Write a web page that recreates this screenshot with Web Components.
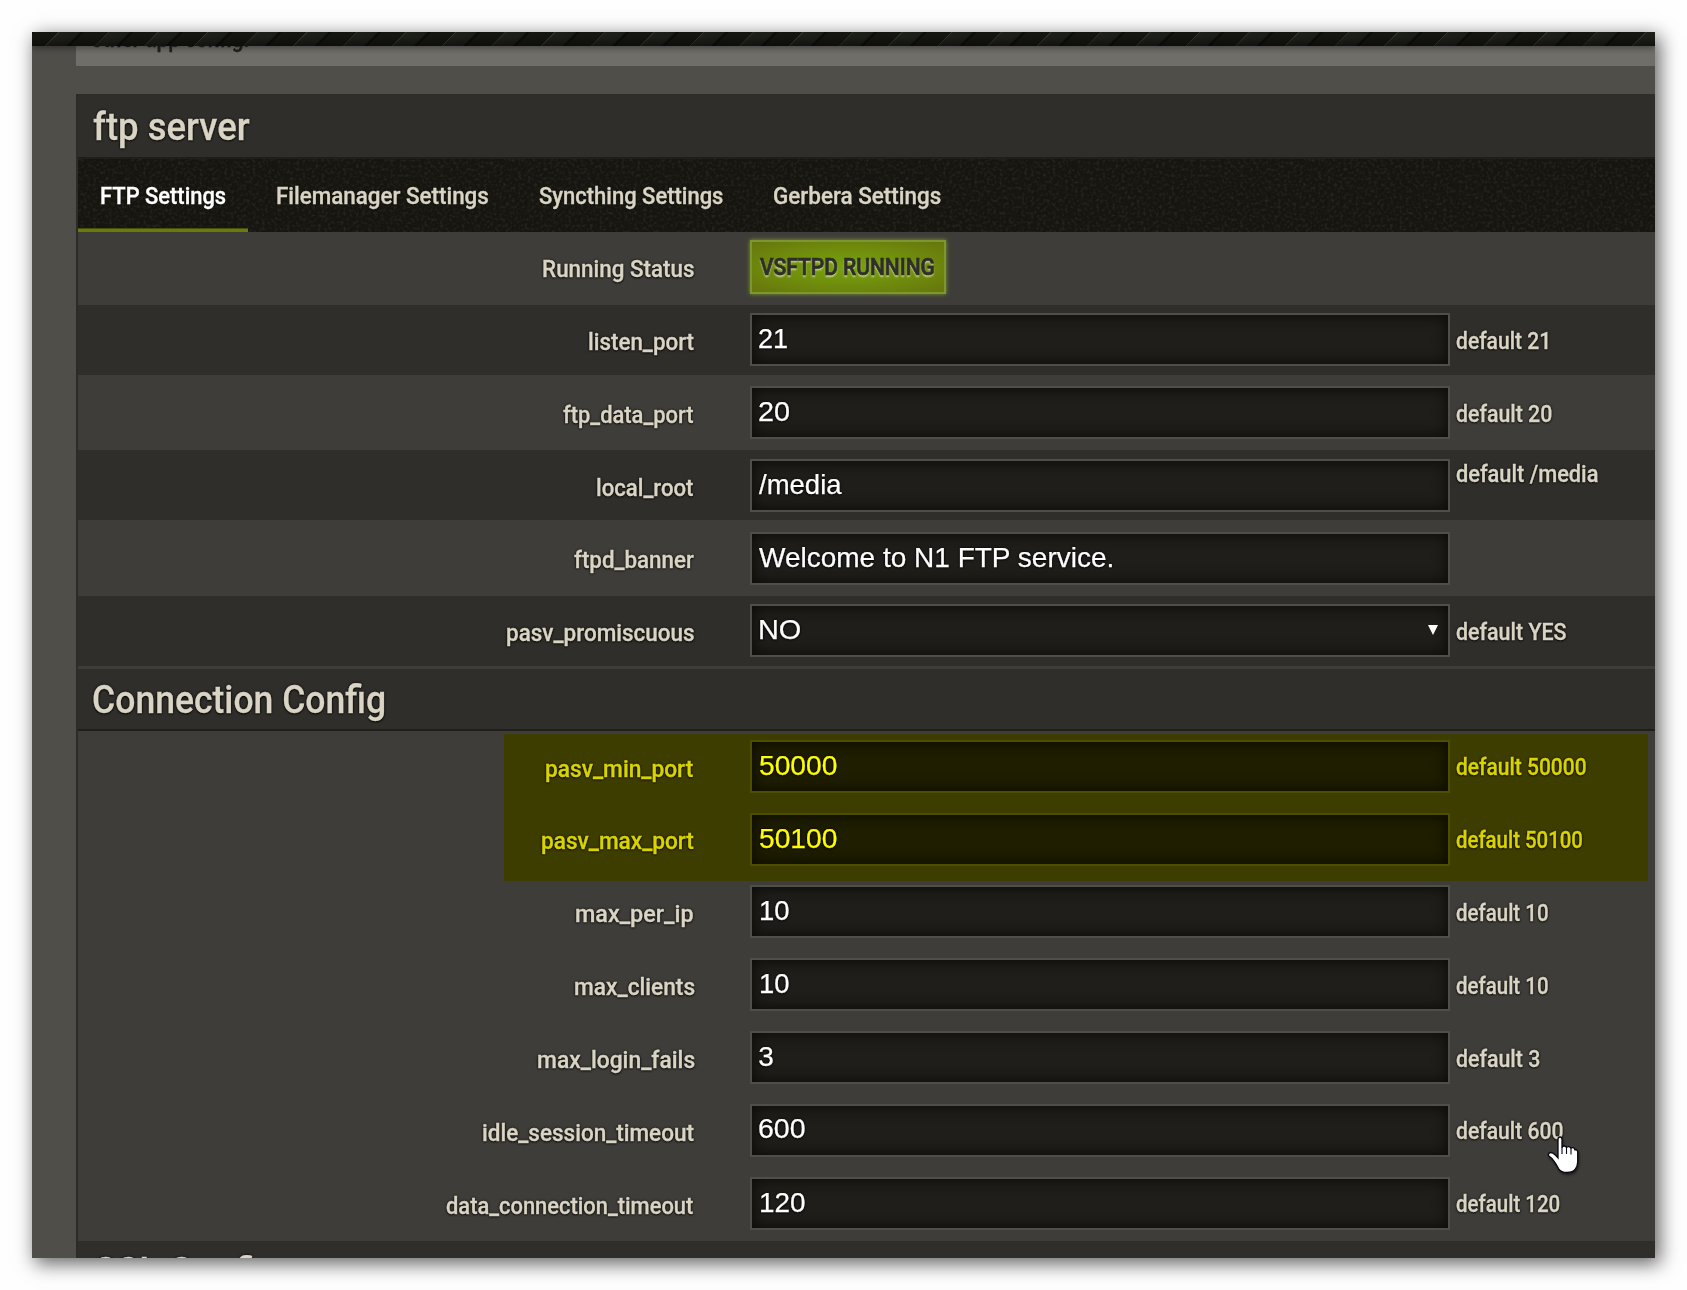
<!DOCTYPE html>
<html lang="en">
<head>
<meta charset="utf-8">
<title>ftp server</title>
<style>
html,body{margin:0;padding:0}
body{width:1687px;height:1290px;overflow:hidden;background:#fefefe;font-family:Roboto,"Liberation Sans",sans-serif}
</style>
</head>
<body>
<app-window>
  <app-notice><fit-text w="157" b="1" size="23">other app config.</fit-text></app-notice>
  <app-panel>
    <panel-title style="--h:63px;--x:14.500px" text="ftp server" w="156.8" b="46"></panel-title>
    <tab-bar>
      <tab-item active style="--w:170px;--p:22.500px"><fit-text w="124.3" b="45" size="23">FTP Settings</fit-text></tab-item>
      <tab-item style="--w:262px;--p:29px"><fit-text w="211" b="45" size="23">Filemanager Settings</fit-text></tab-item>
      <tab-item style="--w:235px;--p:28.500px"><fit-text w="183.6" b="45" size="23">Syncthing Settings</fit-text></tab-item>
      <tab-item style="--w:220px;--p:28.6px"><fit-text w="166.4" b="45" size="23">Gerbera Settings</fit-text></tab-item>
    </tab-bar>
    <form-row h="73" top="8" label="Running Status" lw="150.7" lb="37"><status-badge></status-badge></form-row>
    <form-row dark h="70" top="8" label="listen_port" lw="105.4" lb="37" value="21" vx=".5" vw="28.6" vb="35" hint="default 21" hw="91.6" hb="36"></form-row>
    <form-row h="75" top="11" label="ftp_data_port" lw="130.9" lb="37" value="20" vw="30.4" vb="35" hint="default 20" hw="95.3" hb="36"></form-row>
    <form-row dark h="70" top="9" label="local_root" lw="96.8" lb="37" value="/media" vw="83" vb="35" hint="default /media" hw="142" hb="23"></form-row>
    <form-row h="76" top="12" label="ftpd_banner" lw="119.7" lb="36" value="Welcome to N1 FTP service." vw="354" vb="35"></form-row>
    <form-row dark h="70" top="8" select label="pasv_promiscuous" lw="186.8" lb="37" value="NO" vx="1" vw="40.5" vb="35" hint="default YES" hw="110.6" hb="36"></form-row>
    <panel-title class="section" style="--h:60px;--x:14.500px" text="Connection Config" w="291.2" b="44"></panel-title>
    <highlight-area>
      <form-row h="73" top="9" label="pasv_min_port" lw="147.6" lb="37" value="50000" vx=".7" vw="76.8" vb="35" hint="default 50000" hw="129.6" hb="35"></form-row>
      <form-row h="73" top="9" label="pasv_max_port" lw="152.2" lb="36" value="50100" vx=".7" vw="76.8" vb="35" hint="default 50100" hw="126" hb="35"></form-row>
    </highlight-area>
    <form-row h="72" top="8" label="max_per_ip" lw="117.6" lb="37" value="10" vx="1.8" vw="28" vb="35" hint="default 10" hw="91.6" hb="36"></form-row>
    <form-row h="73" top="9" label="max_clients" lw="119.3" lb="37" value="10" vx="1.8" vw="28" vb="35" hint="default 10" hw="91.6" hb="36"></form-row>
    <form-row h="73" top="9" label="max_login_fails" lw="156.3" lb="37" value="3" vx=".5" vw="14" vb="35" hint="default 3" hw="83.3" hb="36"></form-row>
    <form-row h="73" top="9" label="idle_session_timeout" lw="211.3" lb="37" value="600" vw="46" vb="34" hint="default 600" hw="106.6" hb="35"></form-row>
    <form-row h="73" top="9" label="data_connection_timeout" lw="247.6" lb="37" value="120" vx="1.8" vw="44" vb="35" hint="default 120" hw="103.3" hb="35"></form-row>
    <panel-title class="last" style="--h:60px;--x:17px" text="SSL Config" w="181" b="41"></panel-title>
  </app-panel>
</app-window>
<script>
const shadow=(el,html)=>{const r=el.attachShadow({mode:'open'});r.innerHTML=html;return r;};
const ctx=document.createElement('canvas').getContext('2d');

// Condenses a run of text so its ink spans exactly `w` px with its baseline `b` px below the host's top.
customElements.define('fit-text',class extends HTMLElement{
  connectedCallback(){
    if(this.shadowRoot)return;
    const n=k=>parseFloat(this.getAttribute(k));
    const size=n('size'),w=n('w'),b=n('b')+1,weight=this.getAttribute('weight')||'500';
    const fam=this.getAttribute('family')||'Roboto';
    const L=Math.round(size*1.3);
    const stroke=this.getAttribute('stroke')||(size>30?'.3':'.35');
    ctx.font=`${weight} ${size}px "${fam}"`;
    const m=ctx.measureText(this.textContent.trim());
    const s=w/(m.actualBoundingBoxRight+m.actualBoundingBoxLeft);
    const a=Math.round(m.fontBoundingBoxAscent),d=Math.round(m.fontBoundingBoxDescent);
    const base=Math.round((L-a-d)/2)+a;
    shadow(this,`<style>:host{display:block;width:${w}px;height:${L}px;margin-top:${b-base}px;flex:none;white-space:nowrap}
    span{display:inline-block;font:${weight} ${size}px/${L}px "${fam}","Liberation Sans",sans-serif;-webkit-text-stroke:${stroke}px currentColor;transform-origin:0 0;transform:translateX(${m.actualBoundingBoxLeft*s}px) scaleX(${s})}</style><span><slot></slot></span>`);
  }
});

customElements.define('app-window',class extends HTMLElement{
  constructor(){super();shadow(this,`<style>
  :host{display:block;padding:32px 0 0 32px}
  .win{width:1623px;height:1226px;background:#4f4e49;box-shadow:4px 5px 18px 1px rgba(0,0,0,.6);display:flex;flex-direction:column;position:relative}
  .bar{height:14px;flex:none;position:relative;z-index:2;box-shadow:0 2px 6px rgba(0,0,0,.4);clip-path:inset(0 0 -14px 0);
   background:linear-gradient(rgba(0,0,0,0) 30%,rgba(0,0,0,.35)),repeating-linear-gradient(135deg,#0c0d0a 0,#0c0d0a 1.3px,#141410 2px,#141410 18.7px,#383a34 19.1px,#1d1f19 20px,#1b1d18 33.4px,#0c0d0a 35.07px)}
  .body{flex:1;min-height:0;overflow:hidden;padding-left:44px;color:#d9d4c4}
  mouse-pointer{position:absolute;left:1514px;top:1102px}
  </style><div class="win"><div class="bar"></div><div class="body"><slot></slot></div><mouse-pointer></mouse-pointer></div>`);}
});
customElements.define('mouse-pointer',class extends HTMLElement{
  constructor(){super();shadow(this,`<style>:host{display:block;filter:drop-shadow(1px 2px 1px rgba(0,0,0,.5))}svg{display:block}</style>
  <svg width="34" height="42" viewBox="0 0 34 42"><path d="M12 5.5q0-2.5 2-2.5t2 2.5V14q0-2 2.2-2t2.3 2q.2-1.600 2.200-1.400t2.200 2.200q.2-1.400 2-1.200t2 2.200q2.800-.5 2.800 2.400V28q-.2 4.500-2.400 7.200-2.200 3.300-8.300 3.300-6 0-8.300-3.700-2.500-4.500-4.900-7.800-1.800-3-4.600-4.600-1.600-1.600-.2-3.200 1.400-1.400 4 0 2.600 1.600 5 4.600z" fill="#fff" stroke="#080810" stroke-width="1.300"/><path d="M16 13.500V20M20.500 14V20M25 15V20.500" stroke="#080810" stroke-width="1.100"/></svg>`);}
});
customElements.define('app-notice',class extends HTMLElement{
  constructor(){super();shadow(this,`<style>:host{display:flex;height:20px;background:#6f6e69;padding-left:15px;color:#22211e;margin-bottom:28px}</style><slot></slot>`);}
});
customElements.define('app-panel',class extends HTMLElement{
  constructor(){super();shadow(this,`<style>:host{display:flex;flex-direction:column;border-left:2px solid #2c2b27;background:#3e3d39;text-shadow:0 0 3px #000,0 1px 2px rgba(0,0,0,.8)}::slotted(*){flex:none}</style><slot></slot>`);}
});
customElements.define('panel-title',class extends HTMLElement{
  constructor(){super();shadow(this,`<style>
  :host{display:flex;height:var(--h);background:#2f2e2a;border-bottom:2px solid #1f1e1b;padding-left:var(--x,15px)}
  :host(.section){margin-top:3px}:host(.last){padding-top:3px}</style><fit-text size="39" w="${this.getAttribute('w')}" b="${this.getAttribute('b')}">${this.getAttribute('text')}</fit-text>`);}
});
customElements.define('tab-bar',class extends HTMLElement{
  constructor(){super();shadow(this,`<style>
  :host{display:flex;height:73px;background:#161510;position:relative;text-shadow:0 0 2px #000}
  svg{position:absolute;inset:0;width:100%;height:100%}::slotted(*){z-index:1}</style>
  <svg aria-hidden="true"><filter id="grain" x="0" y="0" width="100%" height="100%" color-interpolation-filters="sRGB"><feTurbulence type="fractalNoise" baseFrequency=".32" numOctaves="2" seed="8"/><feColorMatrix values="0 0 0 0 .2  0 0 0 0 .2  0 0 0 0 .17  1.5 0 0 0 -.7"/></filter><rect width="100%" height="100%" filter="url(#grain)"/></svg><slot></slot>`);}
});
customElements.define('tab-item',class extends HTMLElement{
  constructor(){super();shadow(this,`<style>
  :host{display:flex;box-sizing:border-box;width:var(--w);padding-left:var(--p)}
  :host([active]){color:#fff;box-shadow:inset 0 -3px #6b7a0b,inset 0 -4px #46500c}</style><slot></slot>`);}
});
customElements.define('status-badge',class extends HTMLElement{
  constructor(){super();shadow(this,`<style>
  :host{display:flex;box-sizing:border-box;width:195.500px;height:54px;border:2px solid #7c9730;padding-left:8px;color:#2f2e2a;
  background:radial-gradient(ellipse at center,#78a30c 0,#6f8b0c 55%,#66750c 100%);box-shadow:0 0 4px #8a9c2a;text-shadow:0 2px 2px rgba(235,240,200,.75)}</style>
  <fit-text size="23" stroke=".7" w="174.200" b="33">VSFTPD RUNNING</fit-text>`);}
});
customElements.define('form-field',class extends HTMLElement{
  constructor(){super();const g=k=>this.getAttribute(k);shadow(this,`<style>
  :host{display:flex;box-sizing:border-box;width:700px;height:53px;border:2px solid #4f4e4a;background:#1f1e1a;box-shadow:inset 0 0 14px 1px #0b0a08;padding:0 10px 0 ${6.8+parseFloat(g('vx')||0)}px;color:#fff;justify-content:space-between}
  svg{margin-top:19px}</style>
  <fit-text family="Liberation Sans" weight="400" stroke=".25" size="28" w="${g('vw')}" b="${g('vb')-2}">${g('value')}</fit-text>${this.hasAttribute('select')?'<svg width="10" height="10"><path d="M0 0H10L5 10Z" fill="#fff"/></svg>':''}`);}
});
customElements.define('form-row',class extends HTMLElement{
  constructor(){super();const g=k=>this.getAttribute(k);shadow(this,`<style>
  :host{display:grid;box-sizing:border-box;grid-template-columns:616px 700px 1fr;column-gap:0;height:${g('h')}px;padding-top:${g('top')}px;align-items:start}
  :host([dark]){background:#2f2e2a}
  .l{display:flex;justify-content:flex-end}.f{margin-left:56px}.h{display:flex;margin-left:61.700px}</style>
  <div class="l"><fit-text size="23" w="${g('lw')}" b="${g('lb')}">${g('label')}</fit-text></div>
  <div class="f">${g('value')?`<form-field ${this.hasAttribute('select')?'select':''} value="${g('value')}" vx="${g('vx')||0}" vw="${g('vw')}" vb="${g('vb')}"></form-field>`:'<slot></slot>'}</div>
  <div class="h">${g('hint')?`<fit-text size="23" w="${g('hw')}" b="${g('hb')}">${g('hint')}</fit-text>`:''}</div>`);}
});
customElements.define('highlight-area',class extends HTMLElement{
  constructor(){super();shadow(this,`<style>
  :host{display:block;position:relative}
  .marker{position:absolute;left:426px;top:3px;width:1143.800px;height:146.500px;background:#ff0;mix-blend-mode:multiply}</style><slot></slot><div class="marker"></div>`);}
});
</script>
</body>
</html>
